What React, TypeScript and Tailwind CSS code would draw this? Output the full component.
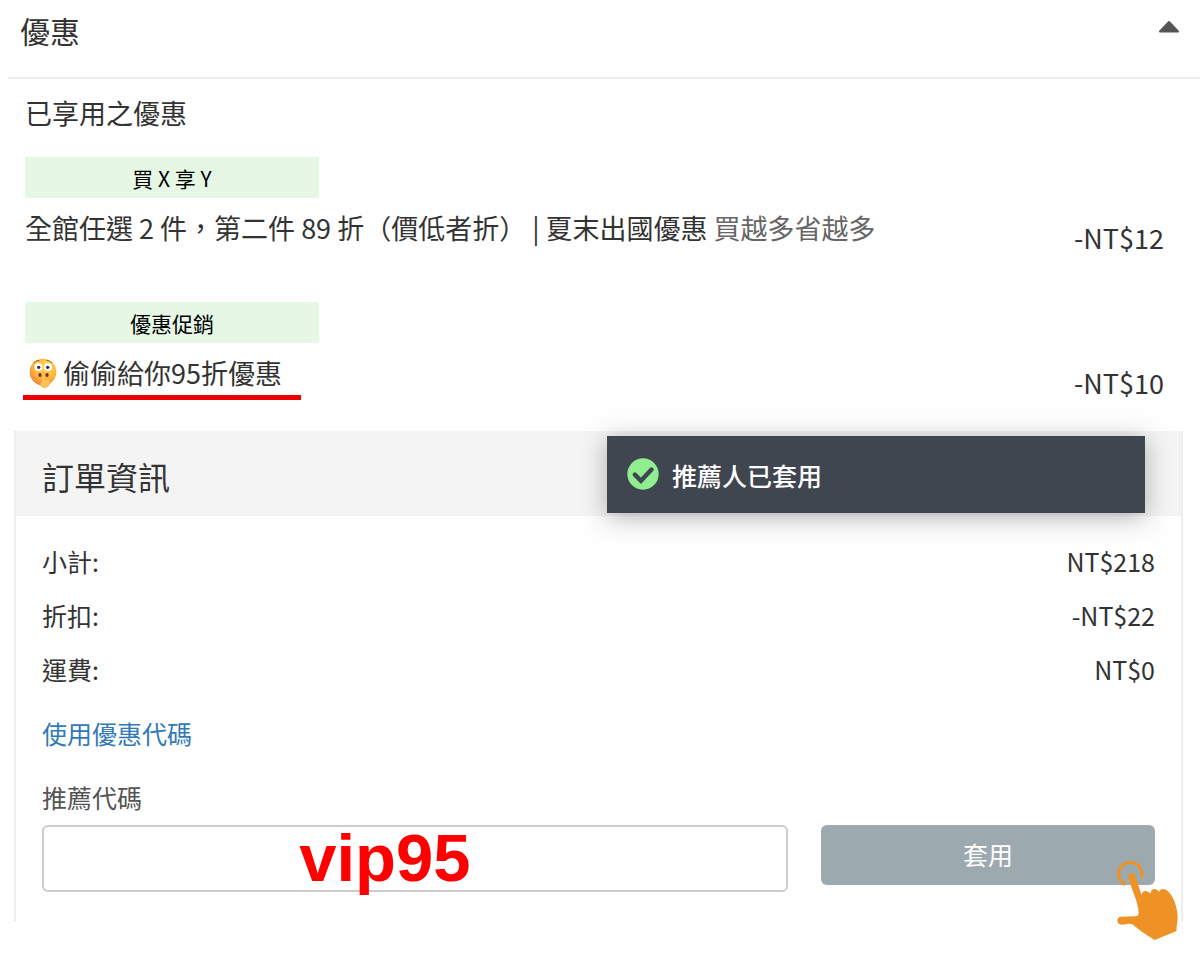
import React from 'react';

interface Promotion {
  tag: string;
  title: React.ReactNode;
  amount: string;
}

interface SummaryRow {
  label: string;
  value: string;
}

const promotions: Promotion[] = [
  {
    tag: '買 X 享 Y',
    title: (
      <p>
        全館任選 2 件，第二件 89 折（價低者折） | 夏末出國優惠{' '}
        <span className="text-[#666]">買越多省越多</span>
      </p>
    ),
    amount: '-NT$12',
  },
  {
    tag: '優惠促銷',
    title: (
      <p className="-ml-0.5 flex w-[278px] items-center gap-1.5 border-b-[5px] border-[#ec0000] pb-0.5 pl-1.5">
        <ShushingFace />
        偷偷給你95折優惠
      </p>
    ),
    amount: '-NT$10',
  },
];

const summary: SummaryRow[] = [
  { label: '小計:', value: 'NT$218' },
  { label: '折扣:', value: '-NT$22' },
  { label: '運費:', value: 'NT$0' },
];

function ShushingFace() {
  return (
    <svg viewBox="0 0 84 90" className="h-[30px] w-7 shrink-0" aria-hidden="true">
      <defs>
        <radialGradient id="face" cx="0.6" cy="0.3" r="0.75">
          <stop offset="0" stopColor="#ffdb55" />
          <stop offset="0.6" stopColor="#fcb43c" />
          <stop offset="1" stopColor="#ee8040" />
        </radialGradient>
      </defs>
      <circle cx="42" cy="42" r="40" fill="url(#face)" />
      <path d="M14 14q7-8 16-7M54 7q9 0 15 8" fill="none" stroke="#a65c35" strokeWidth="3" strokeLinecap="round" />
      <circle cx="28" cy="27" r="12" fill="#fff" />
      <circle cx="57" cy="27" r="12" fill="#fff" />
      <circle cx="29" cy="28" r="5" fill="#40242b" />
      <circle cx="56" cy="28" r="5" fill="#40242b" />
      <ellipse cx="33" cy="51" rx="5" ry="6" fill="#6c3030" />
      <ellipse cx="54" cy="51" rx="5" ry="6" fill="#6c3030" />
      <path
        d="M40 45q3-4 7 0l2 19 9-2q7 1 5 9-3 15-14 18-11 0-15-9l4-12z"
        fill="#ffc34f"
        stroke="#f4a244"
        strokeWidth="2"
      />
    </svg>
  );
}

function CheckIcon() {
  return (
    <svg viewBox="0 0 94 94" className="size-8 shrink-0" aria-hidden="true">
      <circle cx="47" cy="47" r="46" fill="#90ee90" />
      <path
        d="M23 49l18 18 31-33"
        fill="none"
        stroke="#40464f"
        strokeWidth="13"
        strokeLinecap="round"
        strokeLinejoin="miter"
      />
    </svg>
  );
}

function TapHand() {
  return (
    <svg
      viewBox="80 60 189 240"
      className="pointer-events-none absolute -right-6 -bottom-[55px] h-20 w-[63px]"
      aria-hidden="true"
    >
      <path d="M108 134A35 35 0 1 1 156 113" fill="none" stroke="#ef9226" strokeWidth="9" />
      <path
        d="M117 110C115 98 132 94 137 106L157 166C158 154 168 150 177 156L184 161C183 149 194 143 203 149L210 155C213 144 226 145 235 153C252 167 263 199 265 228C266 246 260 259 262 273L196 300C177 287 157 277 143 264C133 255 126 250 114 252L98 254C82 254 79 235 92 230L138 229C144 228 148 225 148 218C146 180 124 145 117 110Z"
        fill="#ef9226"
      />
    </svg>
  );
}

function Toast() {
  return (
    <div
      role="status"
      className="absolute top-[5px] right-9 flex h-[77px] w-[538px] items-center gap-[13px] bg-[#40464f] pb-0.5 pl-5 text-[25px] font-medium text-white shadow-[0_4px_24px_rgba(0,0,0,0.3)]"
    >
      <CheckIcon />
      <span className="pt-1">推薦人已套用</span>
    </div>
  );
}

export default function App() {
  return (
    <main className="bg-[#fefefe] pb-10 font-['Noto_Sans_CJK_TC','Noto_Sans',sans-serif] text-[#333]">
      <header className="ml-2 flex h-[79px] items-start justify-between border-b-2 border-[#eee] pt-2 pr-5 pl-3">
        <h1 className="text-[30px] leading-[44px]">優惠</h1>
        <button type="button" aria-label="收合優惠" className="mt-3">
          <svg viewBox="0 0 22 13" className="h-[13px] w-[22px]" aria-hidden="true">
            <path d="M2 11.500L11 2l9 9.500z" fill="#555" stroke="#555" strokeWidth="2" strokeLinejoin="round" />
          </svg>
        </button>
      </header>

      <section className="pr-9 pl-[25px] text-[27px] leading-10">
        <h2 className="pt-3.5">已享用之優惠</h2>
        {promotions.map((promo) => (
          <div key={promo.tag} className="flex h-[145px] items-start justify-between pt-6">
            <div>
              <div className="mb-2.5 h-[41px] w-[294px] bg-[#e6f7e6] text-center text-[21px] leading-[42px] text-black">
                {promo.tag}
              </div>
              {promo.title}
            </div>
            <span className="pt-[61px]">{promo.amount}</span>
          </div>
        ))}
      </section>

      <section className="relative mt-2 mr-[17px] ml-3.5 border-x-2 border-[#eee] text-[25px]">
        <h2 className="h-[85px] bg-[#f4f4f4] pl-[26px] text-[32px] leading-[90px]">訂單資訊</h2>
        <Toast />

        <div className="px-[26px] pt-[18px] pb-[29px]">
          <dl>
            {summary.map((row) => (
              <div key={row.label} className="flex justify-between leading-[54px]">
                <dt>{row.label}</dt>
                <dd>{row.value}</dd>
              </div>
            ))}
          </dl>

          <a href="#coupon" className="mt-[15px] block leading-[44px] text-[#337ab7]">
            使用優惠代碼
          </a>

          <form onSubmit={(e) => e.preventDefault()}>
            <label htmlFor="referral" className="mt-5 block leading-[44px] text-[#555]">
              推薦代碼
            </label>
            <div className="mt-1.5 flex items-start justify-between">
              <div className="flex h-[67px] w-[67%] items-center rounded-md border-2 border-[#ccc] bg-white">
                <input
                  id="referral"
                  type="text"
                  defaultValue="vip95"
                  className="h-20 w-full shrink-0 bg-transparent pr-15 text-center font-['Liberation_Sans',sans-serif] text-[67px] font-bold text-[#f00] outline-none"
                />
              </div>
              <div className="relative w-[30%]">
                <button type="submit" className="h-[60px] w-full rounded-md bg-[#9ca9af] text-white">
                  套用
                </button>
                <TapHand />
              </div>
            </div>
          </form>
        </div>
      </section>
    </main>
  );
}
